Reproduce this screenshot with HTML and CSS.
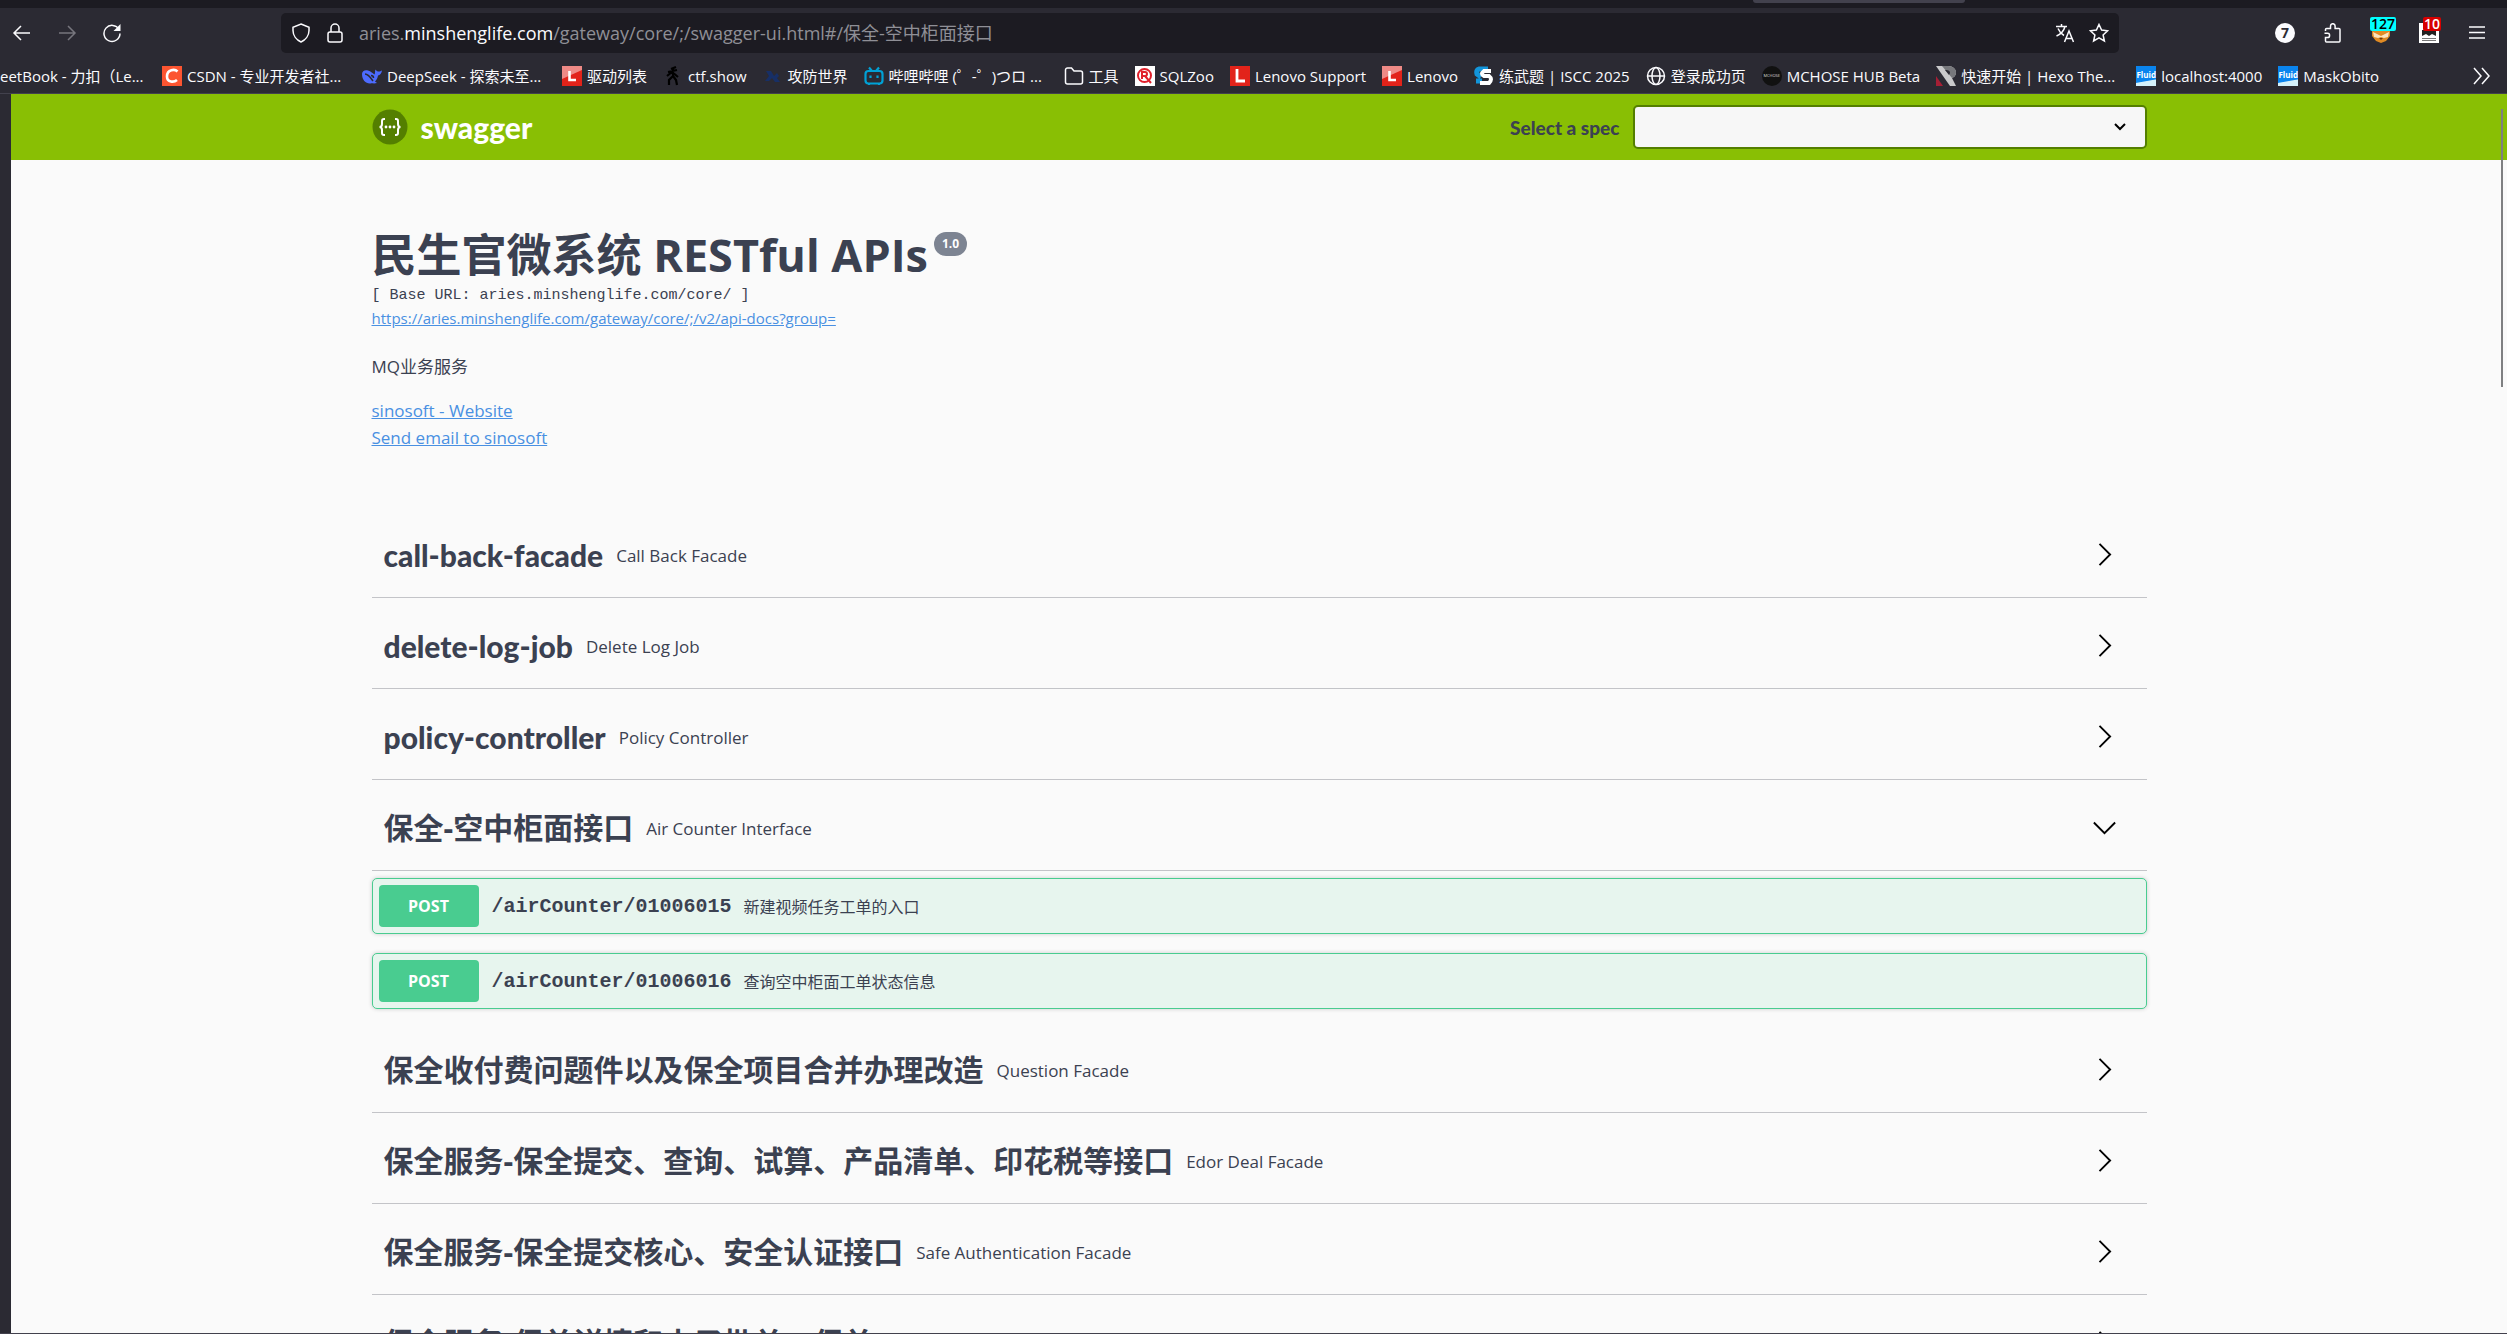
FILE: index.html
```html
<!DOCTYPE html>
<html lang="zh-CN">
<head>
<meta charset="utf-8">
<title>Swagger UI</title>
<link rel="stylesheet" href="styles.css">
</head>
<body>
<div class="window">
  <div class="tabstrip"><span class="tabstrip__active"></span></div>

  <div class="toolbar">
    <div class="toolbar__nav">
      <button class="icon-button" aria-label="Back"><svg width="20" height="20" viewBox="0 0 20 20"><path d="M18 10H2M9 3l-7 7 7 7"/></svg></button>
      <button class="icon-button icon-button--off" aria-label="Forward"><svg width="20" height="20" viewBox="0 0 20 20"><path d="M2 10h16M11 3l7 7-7 7"/></svg></button>
      <button class="icon-button" aria-label="Reload"><svg width="20" height="20" viewBox="0 0 20 20"><path d="M17 6.500A8 8 0 1 0 18 10.500"/><path class="solid" d="M18.500 1v7H11.500z"/></svg></button>
    </div>
    <div class="urlbar">
      <svg width="20" height="20" viewBox="0 0 20 20"><path d="M10 1l8 3.200v3.300c0 5-3.500 9.500-8 11.500-4.500-2-8-6.500-8-11.500V4.200z"/></svg>
      <svg width="20" height="20" viewBox="0 0 20 20"><rect x="3" y="9" width="14" height="10" rx="2"/><path d="M6 9V5a4 4 0 0 1 8 0v4"/></svg>
      <div class="urlbar__text">aries.<b>minshenglife.com</b>/gateway/core/;/swagger-ui.html#/保全-空中柜面接口</div>
      <button class="icon-button" aria-label="Translate"><svg width="20" height="20" viewBox="0 0 20 20"><path d="M1 3.500h11M6.500 1v2.500M10 3.500c-1 4-4 7.500-8.500 9.500M3 5.500c1.500 3.500 3.500 5.500 6 7M9.500 19l4.500-11 4.500 11M11 15.500h6"/></svg></button>
      <button class="icon-button" aria-label="Bookmark"><svg width="20" height="20" viewBox="0 0 20 20"><path d="M10 1.500l2.600 5.600 6 .7-4.500 4.100 1.300 6.100-5.400-3.100L4.600 18l1.300-6.100L1.400 7.800l6-.7z"/></svg></button>
    </div>
    <div class="toolbar__actions">
      <button class="icon-button" aria-label="Account"><span class="disc">7</span></button>
      <button class="icon-button" aria-label="Extensions"><svg width="20" height="20" viewBox="0 0 20 20"><path d="M2.500 8V6.500a1 1 0 0 1 1-1h4V3a2.300 2.300 0 0 1 4.600 0v2.500H16a1 1 0 0 1 1 1V18a1 1 0 0 1-1 1H3.500a1 1 0 0 1-1-1v-3.500h2a2 2 0 0 0 0-4.200H1.500"/></svg></button>
      <button class="icon-button" aria-label="Fox extension"><svg width="20" height="20" viewBox="0 0 20 20"><path fill="#e08a24" stroke="none" d="M1 3l4 2h10l4-2v10l-4 5-5 2-5-2-4-5z"/><path fill="#fbe3bd" stroke="none" d="M2 9l6 3 2 1 2-1 6-3-1 5-4 1-3-1-3 1-4-1z"/><path fill="#6b3a12" stroke="none" d="M8 15h4l-2 2z"/></svg><span class="badge badge--cyan">127</span></button>
      <button class="icon-button" aria-label="Mask extension"><svg width="20" height="20" viewBox="0 0 20 20"><path fill="#fff" stroke="none" d="M0 0h20v20H0z"/><path fill="#222" stroke="none" d="M3 7h14v6l-4-2-3 2-3-2-4 2z"/><path stroke="#777" stroke-width="1" d="M3 15.500h14M3 17.500h14"/></svg><span class="badge badge--red">10</span></button>
      <button class="icon-button" aria-label="Menu"><svg width="20" height="20" viewBox="0 0 20 20"><path d="M2 4h16M2 9.500h16M2 15h16"/></svg></button>
    </div>
  </div>

  <nav class="bookmarks">
    <a class="bookmark bookmark--cut" href="#">eetBook - 力扣（Le...</a>
    <a class="bookmark bookmark--long" href="#"><svg width="20" height="20" viewBox="0 0 20 20"><path fill="#fc5531" stroke="none" d="M0 0h20v20H0z"/><path stroke="#fff" stroke-width="2.600" d="M15.500 5.500C13 3 5 3 5 10.500c0 6 7 6 10 3.500"/></svg>CSDN - 专业开发者社...</a>
    <a class="bookmark bookmark--long" href="#"><svg width="20" height="20" viewBox="0 0 20 20"><path fill="#4d6bfe" stroke="none" d="M0 8c0-3 3-4.500 6-3.500 3 .5 4 2.500 6.500 4 1-1.500 0-3 1-5 1 1.500 2 2 3 2 1.500 0 2.500-.5 3.500-1-.5 3-2 4.500-4 5-.5 3-1.500 4.500-3 6l2 1.500c-3 1-5 0-6.500.5C4 18 0 14 0 8z"/><path stroke="#2b2a33" stroke-width="1.500" d="M3 8c3 0 6 4 8 7M9 9.500c1.500 0 2.500 1 2.500 2.500"/></svg>DeepSeek - 探索未至...</a>
    <a class="bookmark" href="#"><svg width="20" height="20" viewBox="0 0 20 20"><path fill="#e2231a" stroke="none" d="M0 0h20v20H0z"/><path fill="#ee8a86" stroke="none" d="M0 0h20v4L0 13z"/><path stroke="#fff" stroke-width="2.600" d="M7.500 5v9H14"/></svg>驱动列表</a>
    <a class="bookmark" href="#"><svg width="20" height="20" viewBox="0 0 20 20"><path stroke="#000" stroke-width="2.200" d="M13 1L8 3M5 6l9-2M10 3v8M4 10l5-4 6 5M10 10l-4 4v5M10 10l3 4 1 5"/></svg>ctf.show</a>
    <a class="bookmark" href="#"><svg width="20" height="20" viewBox="0 0 20 20"><path fill="#172f66" stroke="none" d="M3 5h5l3 5 3-3 2 3-2 2 3 4h-5l-3-4-3 3H2l4-5z"/></svg>攻防世界</a>
    <a class="bookmark bookmark--long" href="#"><svg width="20" height="20" viewBox="0 0 20 20"><g stroke="#00a1d6" stroke-width="2.200"><rect x="1.500" y="5" width="17" height="12.500" rx="3"/><path d="M5 1.500L8 5M15 1.500L12 5M6.500 9.500v2.500M13.500 9.500v2.500M5 18v1M15 18v1"/></g></svg>哔哩哔哩 (゜-゜)つロ ...</a>
    <a class="bookmark" href="#"><svg width="20" height="20" viewBox="0 0 20 20"><path d="M1.500 16V4a2 2 0 0 1 2-2h4l2.500 3h6.500a2 2 0 0 1 2 2v9a2 2 0 0 1-2 2h-13a2 2 0 0 1-2-2z"/></svg>工具</a>
    <a class="bookmark" href="#"><svg width="20" height="20" viewBox="0 0 20 20"><path fill="#fff" stroke="none" d="M0 0h20v20H0z"/><g stroke="#e0202c" stroke-width="2"><circle cx="9.500" cy="9.500" r="6.500"/><path d="M7 13V6h3a2 2 0 0 1 0 4H7M10 10l6 7"/></g></svg>SQLZoo</a>
    <a class="bookmark" href="#"><svg width="20" height="20" viewBox="0 0 20 20"><path fill="#e2231a" stroke="none" d="M0 0h20v20H0z"/><path stroke="#fff" stroke-width="2.800" d="M7 3v12h8"/></svg>Lenovo Support</a>
    <a class="bookmark" href="#"><svg width="20" height="20" viewBox="0 0 20 20"><path fill="#e2231a" stroke="none" d="M0 0h20v20H0z"/><path fill="#ee8a86" stroke="none" d="M0 0h20v4L0 13z"/><path stroke="#fff" stroke-width="2.600" d="M7.500 5v9H14"/></svg>Lenovo</a>
    <a class="bookmark" href="#"><svg width="20" height="20" viewBox="0 0 20 20"><path stroke="#1295db" stroke-width="5" d="M14 3H5Q2 4 3 8l4 3M2 15h6"/><path stroke="#fff" stroke-width="4" d="M17 5H10Q6 8 10 10h5q4 3 0 7H6"/></svg>练武题 | ISCC 2025</a>
    <a class="bookmark" href="#"><svg width="20" height="20" viewBox="0 0 20 20"><circle cx="10" cy="10" r="8.500"/><ellipse cx="10" cy="10" rx="4" ry="8.500"/><path d="M1.500 10h17"/></svg>登录成功页</a>
    <a class="bookmark" href="#"><span class="mchose">MCHOSE</span>MCHOSE HUB Beta</a>
    <a class="bookmark bookmark--long" href="#"><svg width="20" height="20" viewBox="0 0 20 20"><path fill="#c9c9cb" stroke="none" d="M0 0h12c5 0 8 3 8 6.500 0 3-2 5-4 5.500l4 8h-6z"/><path fill="#77787c" stroke="none" d="M6 0h6c5 0 8 3 8 6.500 0 3-2 5-4 5.500z"/><path fill="#2b2a33" stroke="none" d="M9 4c4 0 5 1 5 3l-1 2z"/><path fill="#a51f35" stroke="none" d="M0 10l7 10H0z"/></svg>快速开始 | Hexo The...</a>
    <a class="bookmark" href="#"><span class="fluid">Fluid</span>localhost:4000</a>
    <a class="bookmark" href="#"><span class="fluid">Fluid</span>MaskObito</a>
    <button class="icon-button bookmarks__more" aria-label="More bookmarks"><svg width="20" height="20" viewBox="0 0 20 20"><path d="M3 2l7 8-7 8M11 2l7 8-7 8"/></svg></button>
  </nav>

  <div class="page">
    <header class="topbar">
      <div class="wrapper topbar__inner">
        <a class="brand" href="#"><svg width="36" height="36" viewBox="0 0 36 36"><circle cx="18" cy="18" r="17.500" fill="#547f00" stroke="none"/><g stroke="#fff" stroke-width="2"><path d="M13 10h-1q-2 0-2 2v3q0 3-2.500 3 2.500 0 2.500 3v3q0 2 2 2h1M23 10h1q2 0 2 2v3q0 3 2.500 3-2.500 0-2.500 3v3q0 2-2 2h-1"/></g><g fill="#fff" stroke="none"><circle cx="14" cy="18" r="1.400"/><circle cx="18" cy="18" r="1.400"/><circle cx="22" cy="18" r="1.400"/></g></svg>swagger</a>
        <label class="spec" for="spec">Select a spec</label>
        <div class="spec-box"><select id="spec" class="spec-box__select"></select><svg class="spec-box__arrow" width="20" height="20" viewBox="0 0 20 20"><path d="M5 7l5 5 5-5"/></svg></div>
      </div>
    </header>

    <main class="wrapper">
      <section class="info">
        <h1 class="info__title">民生官微系统 RESTful APIs<span class="info__version">1.0</span></h1>
        <p class="info__base">[ Base URL: aries.minshenglife.com/core/ ]</p>
        <a class="info__docs" href="#">https://aries.minshenglife.com/gateway/core/;/v2/api-docs?group=</a>
        <p class="info__about">MQ业务服务</p>
        <a class="info__link" href="#">sinosoft - Website</a>
        <a class="info__link" href="#">Send email to sinosoft</a>
      </section>

      <section class="tag"><h2 class="tag__name tag__name--latin">call-back-facade</h2><p class="tag__about">Call Back Facade</p><button class="tag__toggle" aria-label="Expand"><svg width="25" height="25" viewBox="0 0 20 20"><path d="M6 1.500l8.500 8.500L6 18.500"/></svg></button></section>
      <section class="tag"><h2 class="tag__name tag__name--latin">delete-log-job</h2><p class="tag__about">Delete Log Job</p><button class="tag__toggle" aria-label="Expand"><svg width="25" height="25" viewBox="0 0 20 20"><path d="M6 1.500l8.500 8.500L6 18.500"/></svg></button></section>
      <section class="tag"><h2 class="tag__name tag__name--latin">policy-controller</h2><p class="tag__about">Policy Controller</p><button class="tag__toggle" aria-label="Expand"><svg width="25" height="25" viewBox="0 0 20 20"><path d="M6 1.500l8.500 8.500L6 18.500"/></svg></button></section>
      <section class="tag"><h2 class="tag__name">保全-空中柜面接口</h2><p class="tag__about">Air Counter Interface</p><button class="tag__toggle" aria-label="Collapse"><svg width="25" height="25" viewBox="0 0 20 20"><path d="M1.500 6l8.500 8.500L18.500 6"/></svg></button></section>
      <div class="operations">
        <div class="operation"><button class="operation__method">POST</button><span class="operation__path">/airCounter/01006015</span><span class="operation__about">新建视频任务工单的入口</span></div>
        <div class="operation"><button class="operation__method">POST</button><span class="operation__path">/airCounter/01006016</span><span class="operation__about">查询空中柜面工单状态信息</span></div>
      </div>
      <section class="tag"><h2 class="tag__name">保全收付费问题件以及保全项目合并办理改造</h2><p class="tag__about">Question Facade</p><button class="tag__toggle" aria-label="Expand"><svg width="25" height="25" viewBox="0 0 20 20"><path d="M6 1.500l8.500 8.500L6 18.500"/></svg></button></section>
      <section class="tag"><h2 class="tag__name">保全服务-保全提交、查询、试算、产品清单、印花税等接口</h2><p class="tag__about">Edor Deal Facade</p><button class="tag__toggle" aria-label="Expand"><svg width="25" height="25" viewBox="0 0 20 20"><path d="M6 1.500l8.500 8.500L6 18.500"/></svg></button></section>
      <section class="tag"><h2 class="tag__name">保全服务-保全提交核心、安全认证接口</h2><p class="tag__about">Safe Authentication Facade</p><button class="tag__toggle" aria-label="Expand"><svg width="25" height="25" viewBox="0 0 20 20"><path d="M6 1.500l8.500 8.500L6 18.500"/></svg></button></section>
      <section class="tag"><h2 class="tag__name">保全服务-保单详情和电子批单、保单</h2><button class="tag__toggle" aria-label="Expand"><svg width="25" height="25" viewBox="0 0 20 20"><path d="M6 1.500l8.500 8.500L6 18.500"/></svg></button></section>
    </main>
    <span class="scroll-thumb"></span>
  </div>
</div>
</body>
</html>
```
FILE: styles.css
```css
* { box-sizing: border-box; }

body {
  margin: 0;
  background: #2b2a33;
  color: #3b4151;
  font-family: "Open Sans", "Noto Sans CJK SC", sans-serif;
  overflow: hidden;
}

h1, h2, p { margin: 0; }
svg { fill: none; stroke: currentColor; stroke-width: 1.5; flex: none; display: block; }
svg .solid { fill: currentColor; stroke: none; }
button { font: inherit; color: inherit; border: 0; background: none; padding: 0; }

.window {
  height: 100vh;
  display: flex;
  flex-direction: column;
  border-bottom: 1px solid #42414d;
}

/* browser chrome */
.tabstrip { height: 8px; flex: none; background: #1c1b22; display: flex; justify-content: center; padding-left: 1210px; }
.tabstrip__active { width: 212px; height: 3px; background: #42414d; border-radius: 0 0 4px 4px; }

.toolbar { display: flex; align-items: center; flex: none; height: 50px; padding: 0 20px 0 12px; color: #fbfbfe; }
.toolbar__nav { display: flex; gap: 25px; width: 269px; flex: none; }
.toolbar__actions { display: flex; justify-content: flex-end; gap: 28px; width: 368px; flex: none; }
.icon-button { position: relative; display: grid; place-items: center; flex: none; min-width: 20px; }
.icon-button--off { color: #77767e; }

.urlbar { display: flex; align-items: center; gap: 14px; flex: 1; height: 40px; padding: 0 10px; border-radius: 5px; background: #1c1b22; }
.urlbar__text { flex: 1; color: #8f8f96; font-size: 18px; line-height: 24px; white-space: nowrap; }
.urlbar__text b { font-weight: 400; color: #fbfbfe; }

.disc { width: 20px; height: 20px; border-radius: 50%; background: #fbfbfe; color: #2b2a33; font-size: 14px; line-height: 20px; font-weight: 700; text-align: center; }
.badge { position: absolute; top: -6px; left: -1px; border-radius: 2px; padding: 0 1px; font-size: 14px; line-height: 14px; font-weight: 600; }
.badge--cyan { background: #0ff; color: #000; }
.badge--red { background: #d70000; color: #fff; left: 4px; }

.bookmarks { display: flex; align-items: center; flex: none; height: 36px; gap: 16px; padding-right: 16px; color: #fbfbfe; font-size: 15px; border-bottom: 1px solid #42414d; }
.bookmark { display: flex; align-items: center; gap: 5px; flex: none; color: inherit; text-decoration: none; white-space: nowrap; }
.bookmark--cut { width: 146px; }
.bookmark--long { width: 184px; }
.bookmarks__more { margin-left: auto; }
.fluid { width: 20px; height: 20px; background: linear-gradient(170deg, #0a84ee 70%, #d5f1fb 74%); color: #fff; font-size: 8px; line-height: 18px; font-weight: 700; text-align: center; }
.mchose { width: 20px; height: 20px; border-radius: 50%; background: #111; color: #ddd; font-size: 4px; line-height: 20px; text-align: center; }

/* swagger page */
.page { position: relative; flex: 1; min-height: 0; overflow: hidden; margin-left: 11px; background: #fafafa; }
.wrapper { width: 100%; max-width: 1825px; margin: 0 auto; padding: 0 25px; }

.topbar { background: #89bf04; }
.topbar__inner { display: flex; align-items: center; height: 66px; }
.brand { display: flex; align-items: center; gap: 13px; flex: 1; color: #fff; font: 900 30px Lato, sans-serif; text-decoration: none; }
.spec { font: 900 19px Lato, sans-serif; margin-right: 13px; }
.spec-box { position: relative; width: 514px; }
.spec-box__select { display: block; width: 100%; height: 44px; appearance: none; border: 2px solid #547f00; border-radius: 5px; background: #f7f7f7; }
.spec-box__arrow { position: absolute; right: 17px; top: 12px; color: #000; stroke-width: 2; }

.info { display: flex; flex-direction: column; align-items: flex-start; padding: 63px 0 56px; }
.info__title { font-size: 45px; line-height: 64px; font-weight: 700; display: flex; align-items: flex-start; gap: 6px; }
.info__version { margin-top: 9px; padding: 0 8px; border-radius: 12px; background: #7d8492; color: #fff; font-size: 12px; line-height: 24px; }
.info__base { font: 15px/18px "Liberation Mono", monospace; }
.info__docs { font-size: 15px; line-height: 26px; color: #4990e2; }
.info__about { font-size: 17px; line-height: 28px; margin: 22px 0 16px; }
.info__link { font-size: 17px; line-height: 27px; color: #4990e2; }

.tag { display: flex; align-items: center; height: 91px; padding: 6px 30px 0 12px; border-bottom: 1px solid #c3c4c8; }
.tag__name { font-size: 30px; line-height: 40px; font-weight: 700; }
.tag__name--latin { font-family: Lato, sans-serif; font-weight: 900; }
.tag__about { padding: 0 13px; font-size: 17px; }
.tag__toggle { margin: 0 0 2px auto; color: #000; }

.operations { display: grid; gap: 19px; padding: 7px 0 13px; }
.operation { display: flex; align-items: center; height: 56px; padding: 0 6px; border: 1px solid #49cc90; border-radius: 5px; background: #e7f5ee; box-shadow: 0 0 4px rgba(0, 0, 0, .19); }
.operation__method { width: 100px; height: 42px; border-radius: 4px; background: #49cc90; color: #fff; font-size: 16px; font-weight: 700; }
.operation__path { padding: 0 12px 0 13px; font: 700 20px "Liberation Mono", monospace; }
.operation__about { font-size: 16px; }

.scroll-thumb { position: absolute; top: 15px; right: 4px; width: 2px; height: 278px; background: #7f8082; }
```
